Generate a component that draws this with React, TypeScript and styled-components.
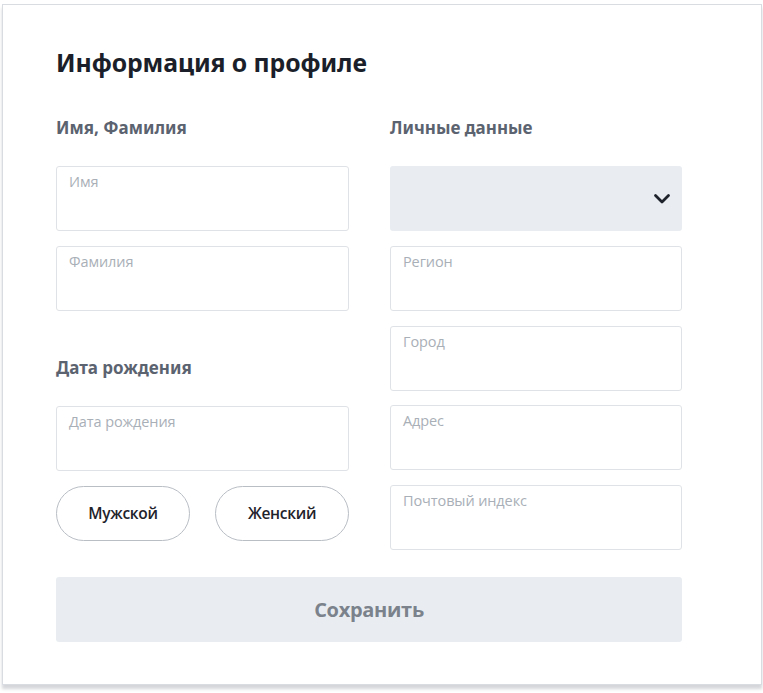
import React from "react";
import styled, { createGlobalStyle } from "styled-components";

const GlobalStyle = createGlobalStyle`
  html, body {
    margin: 0;
    padding: 0;
    background: #ffffff;
  }
  body {
    font-family: "Open Sans", "Noto Sans", sans-serif;
  }
  * {
    box-sizing: border-box;
  }
`;

const Page = styled.div`
  width: 763px;
  height: 693px;
  padding: 4px 1px 0 2px;
`;

const Card = styled.div`
  width: 760px;
  height: 681px;
  background: #ffffff;
  border: 1px solid #d9dde2;
  box-shadow: 0 4px 3px rgba(60, 70, 80, 0.22);
  padding: 41px 80px 0 53px;
`;

const Title = styled.h1`
  margin: 0;
  font-family: "Noto Sans", "Open Sans", sans-serif;
  font-size: 24.8px;
  line-height: 32px;
  font-weight: 700;
  color: #1b1f2a;
  letter-spacing: -0.1px;
`;

const Columns = styled.div`
  display: grid;
  grid-template-columns: 293px 292px;
  column-gap: 41px;
  margin-top: 39px;
`;

const Column = styled.div`
  display: flex;
  flex-direction: column;
`;

const SectionLabel = styled.div<{ $spaced?: boolean }>`
  font-family: "Noto Sans", "Open Sans", sans-serif;
  font-size: 17px;
  line-height: 22px;
  font-weight: 700;
  color: #5c6370;
  margin-top: ${({ $spaced }) => ($spaced ? "46px" : "0")};
  margin-bottom: 27px;
`;

const Fields = styled.div`
  display: flex;
  flex-direction: column;
  gap: 14.75px;
`;

const Field = styled.div`
  height: 65px;
  border: 1px solid #dfe2e6;
  border-radius: 3px;
  background: #ffffff;
  padding: 5px 12px;
  font-family: "Open Sans", sans-serif;
  font-size: 14.5px;
  line-height: 20px;
  color: #a9afb7;
  letter-spacing: -0.1px;
`;

const Select = styled.div`
  height: 65px;
  border-radius: 3px;
  background: #e9edf1;
  display: flex;
  align-items: center;
  justify-content: flex-end;
  padding: 0 8px 0 12px;
`;

const GenderRow = styled.div`
  display: flex;
  justify-content: space-between;
  margin-top: 15px;
`;

const PillButton = styled.button`
  width: 134px;
  height: 55px;
  border-radius: 28px;
  border: 1px solid #b9bec5;
  background: #ffffff;
  font-family: "Open Sans", sans-serif;
  font-size: 15.5px;
  font-weight: 600;
  color: #1f232b;
  letter-spacing: -0.3px;
  cursor: pointer;
`;

const SaveButton = styled.button`
  width: 626px;
  height: 65px;
  margin-top: 27px;
  border: none;
  border-radius: 3px;
  background: #e9edf1;
  font-family: "Open Sans", sans-serif;
  font-size: 20px;
  font-weight: 700;
  color: #7b828b;
  letter-spacing: -0.3px;
  cursor: pointer;
`;

const Chevron = () => (
  <svg width="24" height="24" viewBox="0 0 24 24" fill="none">
    <path d="M5.5 8.5 12 15l6.5-6.5" stroke="#1d222b" strokeWidth="2.8" strokeLinecap="round" strokeLinejoin="round" />
  </svg>
);

export default function App() {
  return (
    <>
      <GlobalStyle />
      <Page>
        <Card>
          <Title>Информация о профиле</Title>
          <Columns>
            <Column>
              <SectionLabel>Имя, Фамилия</SectionLabel>
              <Fields>
                <Field>Имя</Field>
                <Field>Фамилия</Field>
              </Fields>
              <SectionLabel $spaced>Дата рождения</SectionLabel>
              <Fields>
                <Field>Дата рождения</Field>
              </Fields>
              <GenderRow>
                <PillButton>Мужской</PillButton>
                <PillButton>Женский</PillButton>
              </GenderRow>
            </Column>
            <Column>
              <SectionLabel>Личные данные</SectionLabel>
              <Fields>
                <Select>
                  <Chevron />
                </Select>
                <Field>Регион</Field>
                <Field>Город</Field>
                <Field>Адрес</Field>
                <Field>Почтовый индекс</Field>
              </Fields>
            </Column>
          </Columns>
          <SaveButton>Сохранить</SaveButton>
        </Card>
      </Page>
    </>
  );
}
